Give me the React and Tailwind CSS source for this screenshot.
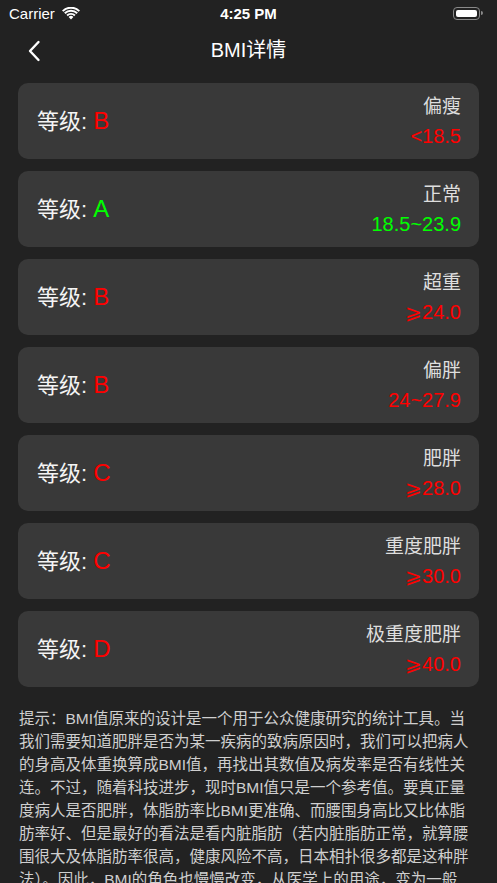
import React from "react";

const F = { fontFamily: '"Liberation Sans", "Noto Sans CJK SC", sans-serif' };

const items = [
  { g: "B", gc: "text-[#ff0000]", n: "偏瘦", v: "<18.5" },
  { g: "A", gc: "text-[#00ff00]", n: "正常", v: "18.5~23.9" },
  { g: "B", gc: "text-[#ff0000]", n: "超重", v: "⩾24.0" },
  { g: "B", gc: "text-[#ff0000]", n: "偏胖", v: "24~27.9" },
  { g: "C", gc: "text-[#ff0000]", n: "肥胖", v: "⩾28.0" },
  { g: "C", gc: "text-[#ff0000]", n: "重度肥胖", v: "⩾30.0" },
  { g: "D", gc: "text-[#ff0000]", n: "极重度肥胖", v: "⩾40.0" },
];

function Wifi() {
  return (
    <svg width="18" height="13" viewBox="0 0 18 13">
      <path d="M9 12.5 L6.6 10 A3.4 3.4 0 0 1 11.4 10 Z" fill="#fff" />
      <path d="M4.4 7.8 A6.5 6.5 0 0 1 13.6 7.8 L12.2 9.2 A4.5 4.5 0 0 0 5.8 9.2 Z" fill="#fff" />
      <path d="M2.1 5.5 A9.8 9.8 0 0 1 15.9 5.5 L14.5 6.9 A7.8 7.8 0 0 0 3.5 6.9 Z" fill="#fff" />
      <path d="M0 3.4 A12.8 12.8 0 0 1 18 3.4 L16.6 4.8 A10.8 10.8 0 0 0 1.4 4.8 Z" fill="#fff" />
    </svg>
  );
}

export default function App() {
  return (
    <div className="w-[497px] h-[883px] overflow-hidden bg-[#222222] text-white" style={F}>
      {/* status bar */}
      <div className="h-[26px] relative flex items-center px-[9px]">
        <span className="text-[15px] text-white leading-none">Carrier</span>
        <span className="ml-[7px] flex items-center"><Wifi /></span>
        <span className="absolute left-1/2 -translate-x-1/2 text-[15px] font-bold leading-none top-[6px]">4:25 PM</span>
        <div className="ml-auto flex items-center mr-[5px]">
          <div className="w-[27px] h-[13px] rounded-[4px] border border-[#8a8a8a] p-[2px]">
            <div className="w-full h-full bg-white rounded-[2px]" />
          </div>
          <div className="w-[2px] h-[4px] bg-[#8a8a8a] rounded-r-sm ml-[1px]" />
        </div>
      </div>
      {/* nav */}
      <div className="h-[48px] relative flex items-center justify-center">
        <svg className="absolute left-[27px] top-[14px]" width="14" height="22" viewBox="0 0 14 22">
          <path d="M11.5 2 L3 11 L11.5 20" stroke="#fff" strokeWidth="2.4" fill="none" strokeLinecap="round" strokeLinejoin="round" />
        </svg>
        <span className="text-[20px] text-white">BMI详情</span>
      </div>
      {/* cards */}
      <div className="flex flex-col gap-[12px] px-[18px] mt-[9px]">
        {items.map((it, i) => (
          <div key={i} className="h-[76px] rounded-[10px] bg-[#393939] flex items-center justify-between pl-[19px] pr-[18px]">
            <div className="flex items-baseline">
              <span className="text-[22px] text-[#f4f4f4]">等级:</span>
              <span className={`text-[24px] ml-[6px] ${it.gc}`}>{it.g}</span>
            </div>
            <div className="flex flex-col items-end justify-between h-full pt-[11px] pb-[10px]">
              <span className="text-[19px] text-[#dedede] leading-[26px]">{it.n}</span>
              <span className={`text-[20px] leading-[26px] ${it.gc}`}>{it.v}</span>
            </div>
          </div>
        ))}
      </div>
      {/* tip */}
      <p className="pl-[19px] w-[472px] mt-[20px] text-[15.5px] leading-[23px] text-[#cfcfcf]">
        提示：BMI值原来的设计是一个用于公众健康研究的统计工具。当我们需要知道肥胖是否为某一疾病的致病原因时，我们可以把病人的身高及体重换算成BMI值，再找出其数值及病发率是否有线性关连。不过，随着科技进步，现时BMI值只是一个参考值。要真正量度病人是否肥胖，体脂肪率比BMI更准确、而腰围身高比又比体脂肪率好、但是最好的看法是看内脏脂肪（若内脏脂肪正常，就算腰围很大及体脂肪率很高，健康风险不高，日本相扑很多都是这种胖法）。因此，BMI的角色也慢慢改变，从医学上的用途，变为一般大众的纤体指标。
      </p>
    </div>
  );
}
